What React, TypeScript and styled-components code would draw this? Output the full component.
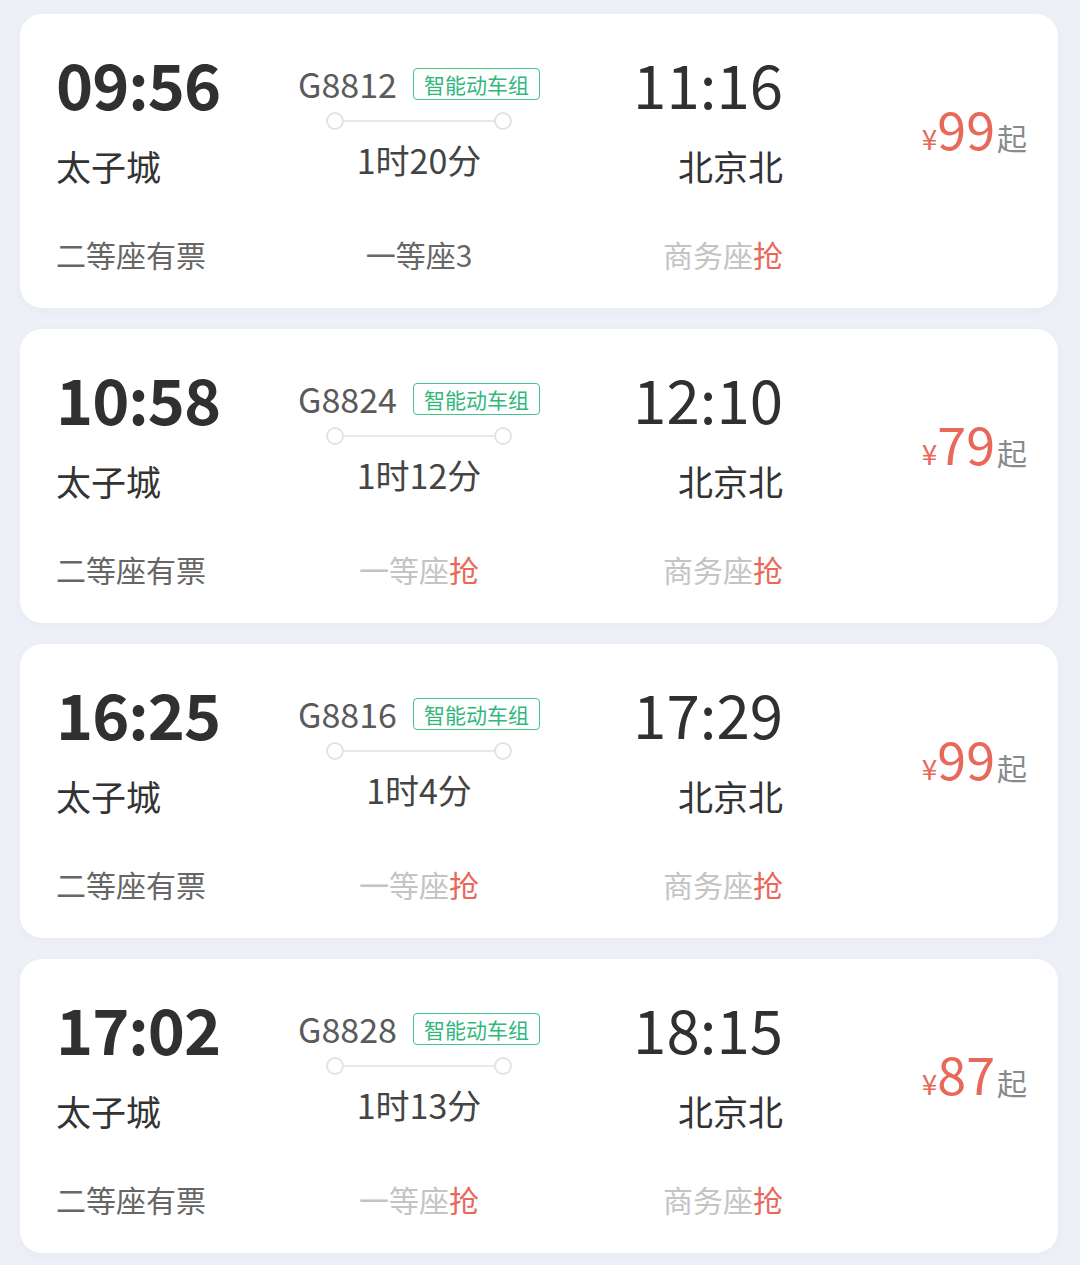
import React from "react";
import styled, { createGlobalStyle } from "styled-components";

const GlobalStyle = createGlobalStyle`
  html, body {
    margin: 0;
    padding: 0;
    background: #eef0f7;
  }
  body {
    font-family: "Noto Sans CJK SC", "Noto Sans", sans-serif;
    -webkit-font-smoothing: antialiased;
  }
`;

const Page = styled.div`
  display: flex;
  flex-direction: column;
  gap: 21px;
  padding: 14px 22px 12px 20px;
  background: #eef0f7;
`;

const Card = styled.div`
  display: flex;
  align-items: flex-start;
  height: 294px;
  box-sizing: border-box;
  padding: 0 31px 0 36px;
  background: #ffffff;
  border-radius: 22px;
  box-shadow: 0 2px 10px rgba(120, 130, 170, 0.06);
`;

const StationCol = styled.div<{ $end?: boolean }>`
  display: flex;
  flex-direction: column;
  align-items: ${(p) => (p.$end ? "flex-end" : "flex-start")};
  width: ${(p) => (p.$end ? "241px" : "240px")};
  padding-top: 36px;
`;

const Time = styled.div<{ $bold?: boolean }>`
  height: 66px;
  font-size: ${(p) => (p.$bold ? "63px" : "60px")};
  line-height: 66px;
  font-weight: ${(p) => (p.$bold ? 700 : 400)};
  color: #303030;
  letter-spacing: ${(p) => (p.$bold ? "-1px" : "0")};
`;

const Station = styled.div`
  margin-top: 30px;
  font-size: 35px;
  line-height: 40px;
  color: #333333;
`;

const Seat = styled.div<{ $tone?: "avail" | "none" }>`
  margin-top: 48px;
  font-size: 30px;
  line-height: 40px;
  color: ${(p) => (p.$tone === "none" ? "#c4c4c4" : "#666666")};
  white-space: nowrap;
`;

const Grab = styled.span`
  color: #e8685a;
`;

const MiddleCol = styled.div`
  display: flex;
  flex-direction: column;
  align-items: center;
  width: 246px;
  padding-top: 50px;
`;

const TrainRow = styled.div`
  display: flex;
  align-items: center;
  gap: 16px;
  height: 40px;
`;

const TrainNo = styled.span`
  font-size: 34px;
  line-height: 40px;
  color: #5a5a5a;
`;

const Badge = styled.span`
  display: flex;
  align-items: center;
  justify-content: center;
  height: 32px;
  box-sizing: border-box;
  padding: 0 10px;
  border: 1.5px solid #45c28d;
  border-radius: 4px;
  font-size: 21px;
  line-height: 1;
  color: #31b77c;
`;

const Track = styled.div`
  display: flex;
  align-items: center;
  width: 186px;
  height: 20px;
  margin-top: 7px;
`;

const Dot = styled.span`
  width: 18px;
  height: 18px;
  box-sizing: border-box;
  border: 2px solid #e3e3e3;
  border-radius: 50%;
  background: #ffffff;
  flex-shrink: 0;
`;

const TrackLine = styled.span`
  flex: 1;
  height: 2px;
  background: #e8e8e8;
`;

const Duration = styled.div`
  margin-top: 9px;
  font-size: 34px;
  line-height: 40px;
  color: #444444;
`;

const MiddleSeat = styled(Seat)`
  margin-top: 54px;
`;

const PriceCol = styled.div`
  flex: 1;
  display: flex;
  justify-content: flex-end;
  align-items: baseline;
  padding-top: 88px;
  line-height: 1;
`;

const Yen = styled.span`
  font-size: 28px;
  color: #e8685a;
`;

const Amount = styled.span`
  font-size: 52px;
  color: #e8685a;
`;

const From = styled.span`
  margin-left: 2px;
  font-size: 30px;
  color: #8a8a8a;
`;

type Train = {
  dep: string;
  arr: string;
  no: string;
  duration: string;
  firstClass: string | null;
  price: number;
};

const trains: Train[] = [
  { dep: "09:56", arr: "11:16", no: "G8812", duration: "1时20分", firstClass: "一等座3", price: 99 },
  { dep: "10:58", arr: "12:10", no: "G8824", duration: "1时12分", firstClass: null, price: 79 },
  { dep: "16:25", arr: "17:29", no: "G8816", duration: "1时4分", firstClass: null, price: 99 },
  { dep: "17:02", arr: "18:15", no: "G8828", duration: "1时13分", firstClass: null, price: 87 },
];

const TrainCard = ({ t }: { t: Train }) => (
  <Card>
    <StationCol>
      <Time $bold>{t.dep}</Time>
      <Station>太子城</Station>
      <Seat>二等座有票</Seat>
    </StationCol>
    <MiddleCol>
      <TrainRow>
        <TrainNo>{t.no}</TrainNo>
        <Badge>智能动车组</Badge>
      </TrainRow>
      <Track>
        <Dot />
        <TrackLine />
        <Dot />
      </Track>
      <Duration>{t.duration}</Duration>
      {t.firstClass ? (
        <MiddleSeat>{t.firstClass}</MiddleSeat>
      ) : (
        <MiddleSeat $tone="none">
          一等座<Grab>抢</Grab>
        </MiddleSeat>
      )}
    </MiddleCol>
    <StationCol $end>
      <Time>{t.arr}</Time>
      <Station>北京北</Station>
      <Seat $tone="none">
        商务座<Grab>抢</Grab>
      </Seat>
    </StationCol>
    <PriceCol>
      <Yen>¥</Yen>
      <Amount>{t.price}</Amount>
      <From>起</From>
    </PriceCol>
  </Card>
);

export default function App() {
  return (
    <>
      <GlobalStyle />
      <Page>
        {trains.map((t) => (
          <TrainCard key={t.no} t={t} />
        ))}
      </Page>
    </>
  );
}
